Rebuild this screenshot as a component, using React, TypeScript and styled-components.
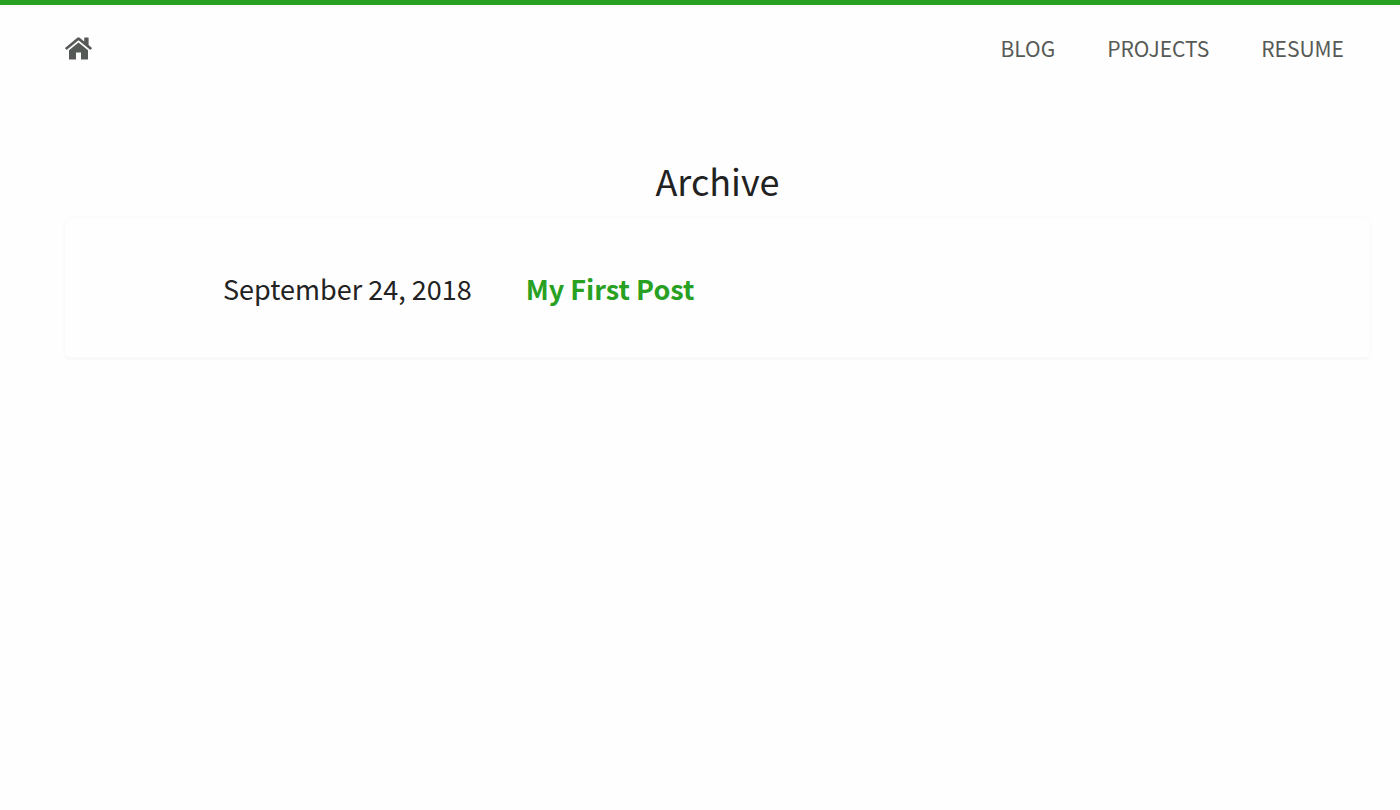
import React from "react";
import styled, { createGlobalStyle } from "styled-components";

const GlobalStyle = createGlobalStyle`
  *, *::before, *::after { box-sizing: border-box; }
  body {
    margin: 0;
    background: #fefefe;
    color: #222;
    font-family: "Noto Sans CJK JP", "Noto Sans", sans-serif;
  }
`;

const Page = styled.div`
  border-top: 5px solid #28a122;
  padding: 0 30px 0 65px;
`;

const Header = styled.header`
  display: flex;
  align-items: center;
  justify-content: space-between;
  height: 86px;
  padding-right: 26px;
`;

const HomeLink = styled.a`
  display: flex;
  color: #565a56;
`;

const Nav = styled.nav`
  display: flex;
  gap: 52px;
`;

const NavLink = styled.a`
  color: #565a56;
  font-size: 21px;
  line-height: 32px;
  text-decoration: none;
  text-transform: uppercase;
`;

const Title = styled.h1`
  margin: 61px 0 10px;
  font-size: 36px;
  font-weight: 400;
  line-height: 56px;
  text-align: center;
`;

const Card = styled.section`
  padding: 51px 158px 48px;
  border-bottom: 3px solid #f8f9f8;
  border-radius: 6px;
  box-shadow: 0 0 4px rgba(0, 0, 0, 0.03);
`;

const Post = styled.article`
  display: flex;
  gap: 54px;
  font-size: 27px;
  line-height: 40px;
`;

const PostLink = styled.a`
  color: #28a122;
  font-weight: 700;
  text-decoration: none;
`;

const HomeIcon = () => (
  <svg width="27" height="23" viewBox="0 0 27 23" fill="currentColor" aria-hidden="true">
    <path d="M13.5 5.4 23 13.3V22a.6.6 0 0 1-.6.6H16v-7h-5v7H4.600a.6.6 0 0 1-.6-.6v-8.700z" />
    <path d="M12.300.8a1.900 1.900 0 0 1 2.400 0L19.200 4.500V1.100a.5.5 0 0 1 .5-.5h3.400a.5.5 0 0 1 .5.5v7l3.100 2.600a.5.5 0 0 1 .1.700l-1 1.200a.5.5 0 0 1-.7.100L13.500 3.200 1.900 12.700a.5.5 0 0 1-.7-.1l-1-1.200a.5.5 0 0 1 .1-.7z" />
  </svg>
);

const links = ["Blog", "Projects", "Resume"];

export default function App() {
  return (
    <>
      <GlobalStyle />
      <Page>
        <Header>
          <HomeLink href="#home" aria-label="Home">
            <HomeIcon />
          </HomeLink>
          <Nav>
            {links.map((label) => (
              <NavLink key={label} href={`#${label.toLowerCase()}`}>
                {label}
              </NavLink>
            ))}
          </Nav>
        </Header>
        <main>
          <Title>Archive</Title>
          <Card>
            <Post>
              <time dateTime="2018-09-24">September 24, 2018</time>
              <PostLink href="#my-first-post">My First Post</PostLink>
            </Post>
          </Card>
        </main>
      </Page>
    </>
  );
}
